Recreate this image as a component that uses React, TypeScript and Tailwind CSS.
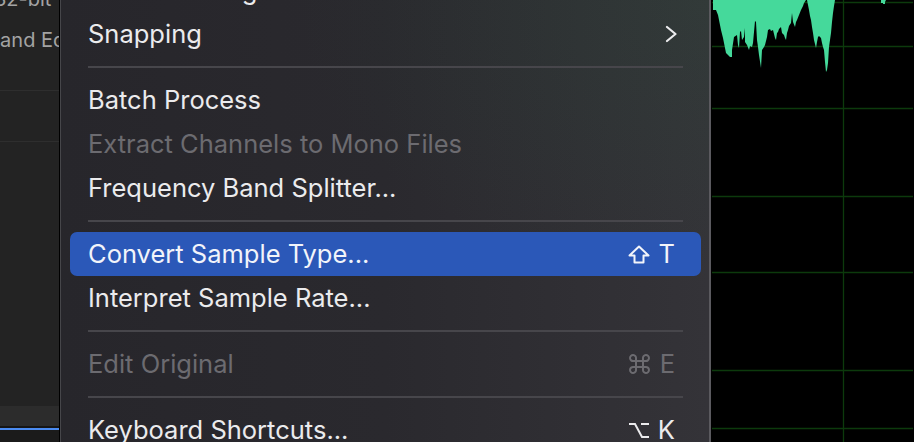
import React from "react";

type Item =
  | { kind: "item"; label: string; disabled?: boolean; active?: boolean; shortcut?: "shift-t" | "cmd-e" | "opt-k"; submenu?: boolean }
  | { kind: "sep" };

const items: Item[] = [
  { kind: "item", label: "Zero Crossings", submenu: true },
  { kind: "item", label: "Snapping", submenu: true },
  { kind: "sep" },
  { kind: "item", label: "Batch Process" },
  { kind: "item", label: "Extract Channels to Mono Files", disabled: true },
  { kind: "item", label: "Frequency Band Splitter..." },
  { kind: "sep" },
  { kind: "item", label: "Convert Sample Type...", active: true, shortcut: "shift-t" },
  { kind: "item", label: "Interpret Sample Rate..." },
  { kind: "sep" },
  { kind: "item", label: "Edit Original", disabled: true, shortcut: "cmd-e" },
  { kind: "sep" },
  { kind: "item", label: "Keyboard Shortcuts...", shortcut: "opt-k" },
];

function ShiftIcon() {
  return (
    <svg width="22" height="19" viewBox="0 0 22 19" fill="none" stroke="currentColor" strokeWidth="2" strokeLinejoin="round">
      <path d="M11 1.5 L20.5 10.5 H15.5 V17.5 H6.5 V10.5 H1.5 Z" />
    </svg>
  );
}

function CmdIcon() {
  return (
    <svg width="21" height="20" viewBox="0 0 21 20" fill="none" stroke="currentColor" strokeWidth="2">
      <path d="M7 7 H14 V13 H7 Z M7 7 V4.5 A3 3 0 1 0 4.5 7 H7 M14 7 V4.5 A3 3 0 1 1 16.5 7 H14 M7 13 V15.5 A3 3 0 1 1 4.5 13 H7 M14 13 V15.5 A3 3 0 1 0 16.5 13 H14" />
    </svg>
  );
}

function OptIcon() {
  return (
    <svg width="22" height="18" viewBox="0 0 22 18" fill="none" stroke="currentColor" strokeWidth="2">
      <path d="M1 3 H7 L14 16 H21 M13 3 H21" />
    </svg>
  );
}

function Shortcut({ kind }: { kind: "shift-t" | "cmd-e" | "opt-k" }) {
  const icon = kind === "shift-t" ? <ShiftIcon /> : kind === "cmd-e" ? <CmdIcon /> : <OptIcon />;
  const key = kind === "shift-t" ? "T" : kind === "cmd-e" ? "E" : "K";
  return (
    <div className="flex items-center gap-[5px]">
      {icon}
      <span className="w-[20px] text-right">{key}</span>
    </div>
  );
}

function MenuRow({ item }: { item: Extract<Item, { kind: "item" }> }) {
  return (
    <div
      className={
        "ml-[9px] mr-[8px] flex h-[44px] shrink-0 items-center justify-between rounded-[7px] pl-[18px] " +
        (item.submenu ? "pr-[24px] " : "pr-[26px] ") +
        (item.active ? "bg-[#2b58b8] text-[#f2f4fa]" : item.disabled ? "text-[#6c6b70]" : "text-[#ebebed]")
      }
    >
      <span className="whitespace-nowrap">{item.label}</span>
      {item.submenu && (
        <svg width="12" height="18" viewBox="0 0 12 18" fill="none" stroke="#ebebed" strokeWidth="2.2" strokeLinecap="round" strokeLinejoin="round">
          <path d="M2 2 L10.5 9 L2 16" />
        </svg>
      )}
      {item.shortcut && <Shortcut kind={item.shortcut} />}
    </div>
  );
}

function Separator() {
  return (
    <div className="flex h-[22px] shrink-0 items-center pl-[27px] pr-[26px]">
      <div className="h-[2px] w-full bg-[#47464b]" />
    </div>
  );
}

const wavePoints =
  "714,0 714,10 717,10 719,15 720,20 722,30 724,38 725,43 727,53 729,55 731,57 733,57 733,50 735,37 738,35 739,45 740,48 741,32 742,31 743,40 745,37 746,28 746,42 748,45 750,50 751,46 753,47 754,43 756,21 757,22 758,40 759,47 760,55 762,68 763,50 765,47 766,45 768,37 769,30 771,29 772,31 774,30 776,38 777,40 778,33 779,32 780,29 782,27 783,33 785,35 786,38 787,40 788,33 789,30 790,26 792,23 793,13 794,22 796,27 797,22 798,20 800,15 802,10 804,6 805,3 807,0";
const wavePoints2 =
  "808,0 809,5 810,10 811,16 812,20 813,27 814,33 815,40 817,48 818,42 819,37 820,36 822,38 823,43 824,47 825,50 826,62 827,72 828,70 829,63 830,47 832,33 833,22 834,13 835,6 836,0";

const gridRows = [2, 46, 108, 196, 272, 370, 428];

function Waveform() {
  return (
    <div className="relative h-full flex-1 overflow-hidden bg-black">
      <svg className="absolute left-0 top-0" width="202" height="442" viewBox="712 0 202 442">
        {gridRows.map((y) => (
          <line key={y} x1="713" x2="914" y1={y + 0.5} y2={y + 0.5} stroke="#0c3a0c" strokeWidth="1.3" />
        ))}
        <line x1="844.5" x2="844.5" y1="0" y2="442" stroke="#0c3a0c" strokeWidth="1.3" />
        <polygon points={wavePoints} fill="#45d99b" />
        <polygon points={wavePoints2} fill="#45d99b" />
        <polygon points="882,0 882,3 884,3 884,4 886,4 886,2 887,0" fill="#45d99b" />
      </svg>
    </div>
  );
}

function LeftPanel() {
  return (
    <div className="flex h-full w-[60px] shrink-0 flex-col overflow-hidden border-r border-black bg-[#232323] text-[20px] text-[#a3a3a3]">
      <div className="-mt-[13px] -ml-[6px] h-[24px] whitespace-nowrap leading-[24px]">32-bit</div>
      <div className="-ml-[13px] mt-[14px] h-[30px] whitespace-nowrap leading-[30px]">Band Editor</div>
      <div className="mt-[35px] h-px bg-[#2e2e2e]" />
      <div className="mt-[50px] h-px bg-[#2e2e2e]" />
      <div className="flex-1" />
      <div className="h-[20px] bg-[#2c2c2c]" />
      <div className="h-[2px] bg-[#151515]" />
      <div className="h-[2px] bg-[#4b8bf0]" />
      <div className="h-[12px] bg-[#1b1b1b]" />
    </div>
  );
}

export default function App() {
  return (
    <div
      className="flex h-[442px] w-[914px] overflow-hidden bg-black"
      style={{ fontFamily: "Inter, 'Noto Sans', sans-serif" }}
    >
      <LeftPanel />
      <div className="relative flex h-full w-[651px] shrink-0 flex-col overflow-hidden border-l border-r-2 border-l-[#46464a] border-r-[#5b5a5f] bg-gradient-to-r from-[#27262b] via-[#2a292e] to-[#343338] text-[25.5px]">
        <div className="pointer-events-none absolute inset-0 bg-[radial-gradient(ellipse_at_top_right,rgba(40,90,60,0.18),transparent_45%)]" />
        <div className="relative -mt-[32px] flex flex-col">
          {items.map((item, i) =>
            item.kind === "sep" ? <Separator key={i} /> : <MenuRow key={i} item={item} />
          )}
        </div>
      </div>
      <Waveform />
    </div>
  );
}
